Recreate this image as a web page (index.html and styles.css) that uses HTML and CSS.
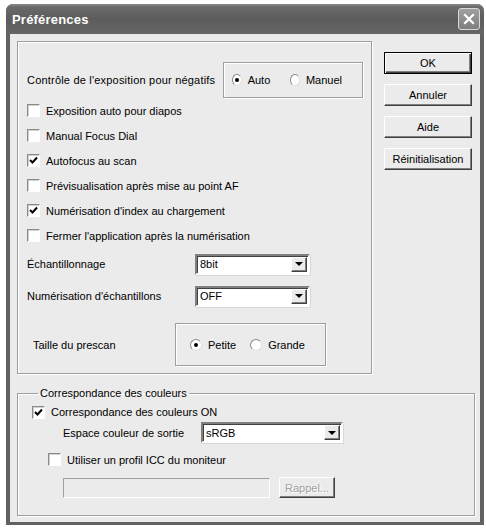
FILE: index.html
```html
<!DOCTYPE html>
<html>

<head>
    <title>Préférences</title>
    <link rel="stylesheet" href="styles.css">
</head>

<body>
<div class="window">
    <div class="titlebar">
        <span class="title">Préférences</span>
        <span class="close">
            <svg width="12" height="12" viewBox="0 0 12 12"><path d="M2 2 L10 10 M10 2 L2 10" stroke="#fff" stroke-width="2.2" stroke-linecap="square"/></svg>
        </span>
    </div>

    <div class="client">
        <div class="top">
            <div class="panel main">
                <div class="row expo">
                    <span class="label">Contrôle de l'exposition pour négatifs</span>
                    <div class="radiobox">
                        <span class="radio checked"></span><span class="rtext">Auto</span>
                        <span class="radio"></span><span class="rtext">Manuel</span>
                    </div>
                </div>
                <div class="row check"><span class="cb"></span>Exposition auto pour diapos</div>
                <div class="row check"><span class="cb"></span>Manual Focus Dial</div>
                <div class="row check"><span class="cb on"><svg width="9" height="9" viewBox="0 0 9 9"><path d="M1 4 L3.5 6.5 L8 1.5" fill="none" stroke="#000" stroke-width="2"/></svg></span>Autofocus au scan</div>
                <div class="row check"><span class="cb"></span>Prévisualisation après mise au point AF</div>
                <div class="row check"><span class="cb on"><svg width="9" height="9" viewBox="0 0 9 9"><path d="M1 4 L3.5 6.5 L8 1.5" fill="none" stroke="#000" stroke-width="2"/></svg></span>Numérisation d'index au chargement</div>
                <div class="row check"><span class="cb"></span>Fermer l'application après la numérisation</div>
                <div class="row field">
                    <span class="flabel">Échantillonnage</span>
                    <div class="select"><span class="value">8bit</span><span class="drop"></span></div>
                </div>
                <div class="row field">
                    <span class="flabel">Numérisation d'échantillons</span>
                    <div class="select"><span class="value">OFF</span><span class="drop"></span></div>
                </div>
                <div class="row prescan">
                    <span class="plabel">Taille du prescan</span>
                    <div class="radiobox small">
                        <span class="radio checked"></span><span class="rtext">Petite</span>
                        <span class="radio"></span><span class="rtext">Grande</span>
                    </div>
                </div>
            </div>

            <div class="buttons">
                <button class="btn default">OK</button>
                <button class="btn">Annuler</button>
                <button class="btn">Aide</button>
                <button class="btn">Réinitialisation</button>
            </div>
        </div>

        <fieldset class="group">
            <legend>Correspondance des couleurs</legend>
            <div class="row check on-row"><span class="cb on"><svg width="9" height="9" viewBox="0 0 9 9"><path d="M1 4 L3.5 6.5 L8 1.5" fill="none" stroke="#000" stroke-width="2"/></svg></span>Correspondance des couleurs ON</div>
            <div class="row space">
                <span class="slabel">Espace couleur de sortie</span>
                <div class="select wide"><span class="value">sRGB</span><span class="drop"></span></div>
            </div>
            <div class="row check icc"><span class="cb"></span>Utiliser un profil ICC du moniteur</div>
            <div class="row path">
                <div class="textbox"></div>
                <button class="btn disabled">Rappel...</button>
            </div>
        </fieldset>
    </div>
</div>
</body>
</html>
```

FILE: styles.css
```css
* {
    box-sizing: border-box;
}
body, html {
    margin: 0;
    padding: 0;
    background-color: #fff;
}
body {
    font-family: "Liberation Sans", Arial, sans-serif;
    font-size: 11px;
    color: #000;
}
.window {
    margin: 4px 0 0 6px;
    width: 478px;
    height: 521px;
    background-color: #616161;
    border-radius: 7px 7px 0 0;
    padding: 0 4px 3px 4px;
    display: flex;
    flex-direction: column;
}
.titlebar {
    height: 30px;
    margin: 0 -4px;
    padding: 0 4px 0 6px;
    border-radius: 7px 7px 0 0;
    background: linear-gradient(#8a8a8a 0, #6a6a6a 3px, #5c5c5c 50%, #666 100%);
    display: flex;
    align-items: center;
    justify-content: space-between;
}
.title {
    color: #fff;
    font-weight: bold;
    font-size: 13px;
    letter-spacing: 0.2px;
}
.close {
    width: 22px;
    height: 22px;
    border: 1px solid #d8d8d8;
    border-radius: 3px;
    background: linear-gradient(#a0a0a0, #7e7e7e);
    display: flex;
    align-items: center;
    justify-content: center;
}
.client {
    flex: 1;
    background-color: #ebebeb;
    padding: 7px 5px 6px 7px;
    display: flex;
    flex-direction: column;
}
.top {
    display: flex;
    align-items: flex-start;
}
.panel {
    border: 1px solid #9e9e9e;
    box-shadow: 1px 1px 0 #fff, inset 1px 1px 0 #fff;
}
.main {
    width: 355px;
    height: 333px;
    padding: 20px 0 0 9px;
    display: flex;
    flex-direction: column;
}
.row {
    display: flex;
    align-items: center;
}
.expo {
    height: 36px;
}
.expo .label {
    width: 196px;
    letter-spacing: 0.2px;
}
.radiobox {
    width: 140px;
    height: 36px;
    border: 1px solid #9e9e9e;
    box-shadow: 1px 1px 0 #fff, inset 1px 1px 0 #fff;
    display: flex;
    align-items: center;
    padding-left: 8px;
}
.radio {
    width: 12px;
    height: 12px;
    border-radius: 50%;
    background-color: #fff;
    border: 1px solid;
    border-color: #8a8a8a #e0e0e0 #e0e0e0 #8a8a8a;
    display: flex;
    align-items: center;
    justify-content: center;
}
.radio.checked::after {
    content: "";
    width: 4px;
    height: 4px;
    border-radius: 50%;
    background-color: #000;
}
.rtext {
    margin: 0 20px 0 6px;
}
.check {
    height: 25px;
}
.cb {
    width: 13px;
    height: 13px;
    margin-right: 6px;
    background-color: #fff;
    border: 1px solid;
    border-color: #8a8a8a #fff #fff #8a8a8a;
    box-shadow: inset 1px 1px 0 #d0d0d0;
    display: flex;
    align-items: center;
    justify-content: center;
}
.field {
    height: 32px;
}
.flabel {
    width: 168px;
}
.select {
    width: 115px;
    height: 21px;
    background-color: #fff;
    border: 2px solid;
    border-color: #808080 #fff #fff #808080;
    box-shadow: inset 1px 1px 0 #404040, 1px 1px 0 #d8d8d8;
    display: flex;
    align-items: center;
    justify-content: space-between;
    padding: 0 1px 0 2px;
}
.select .value {
    padding-left: 1px;
}
.drop {
    width: 16px;
    height: 15px;
    background-color: #ebebeb;
    border: 1px solid;
    border-color: #fff #404040 #404040 #fff;
    box-shadow: inset -1px -1px 0 #808080;
    display: flex;
    align-items: center;
    justify-content: center;
}
.drop::after {
    content: "";
    border-left: 4px solid transparent;
    border-right: 4px solid transparent;
    border-top: 4px solid #000;
}
.prescan {
    padding-top: 11px;
}
.plabel {
    width: 148px;
    padding-left: 6px;
}
.radiobox.small {
    width: 151px;
    height: 43px;
    padding-left: 14px;
}
.radiobox.small .rtext {
    margin-right: 14px;
}
.buttons {
    width: 88px;
    margin: 11px 0 0 12px;
    display: flex;
    flex-direction: column;
    gap: 10px;
}
.btn {
    height: 22px;
    background-color: #ebebeb;
    font-family: "Liberation Sans", Arial, sans-serif;
    font-size: 11px;
    color: #000;
    border: 1px solid;
    border-color: #fff #404040 #404040 #fff;
    box-shadow: inset -1px -1px 0 #808080;
    padding: 0;
}
.btn.default {
    border: 1px solid #000;
    box-shadow: inset 1px 1px 0 #fff, inset -1px -1px 0 #404040, inset -2px -2px 0 #808080;
}
.group {
    margin: 13px 0 0 0;
    width: 458px;
    flex: 1;
    border: 1px solid #9e9e9e;
    box-shadow: 1px 1px 0 #fff, inset 1px 1px 0 #fff;
    padding: 0 0 0 14px;
    min-width: 0;
}
.group legend {
    padding: 0 2px;
    margin-left: 6px;
}
.on-row {
    height: 20px;
    margin-top: 3px;
}
.space {
    height: 21px;
    padding-left: 31px;
}
.slabel {
    width: 138px;
}
.select.wide {
    width: 142px;
}
.icc {
    height: 33px;
    padding-left: 16px;
}
.path {
    padding: 1px 0 0 31px;
}
.textbox {
    width: 207px;
    height: 20px;
    background-color: #ebebeb;
    border: 1px solid;
    border-color: #a0a0a0 #fff #fff #a0a0a0;
    margin-right: 9px;
}
.btn.disabled {
    width: 56px;
    height: 21px;
    color: #a0a0a0;
    text-shadow: 1px 1px 0 #fff;
}
```
